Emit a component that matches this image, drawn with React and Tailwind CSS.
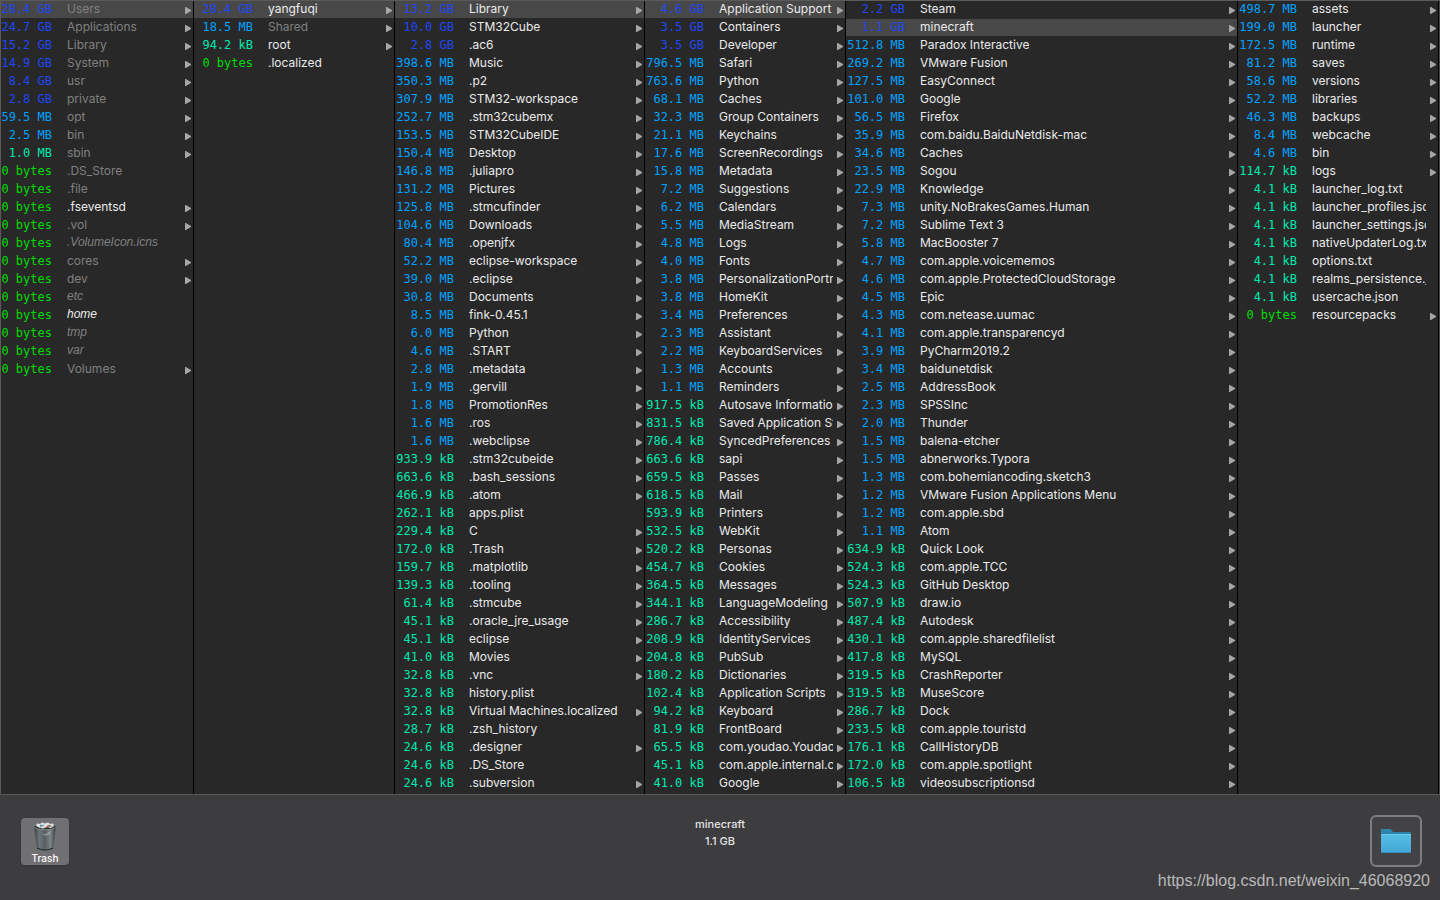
import React, { useState } from 'react';
import clsx from 'clsx';

// Each line: size | name | flags  (d = folder, g = dimmed, i = link)
const parse = (text) =>
    text.trim().split('\n').map((line) => {
        const [size, name, flags = ''] = line.trim().split('|');
        return { size, name, dir: flags.includes('d'), dim: flags.includes('g'), link: flags.includes('i') };
    });

const ROOT = parse(`
28.4 GB|Users|dg
24.7 GB|Applications|dg
15.2 GB|Library|dg
14.9 GB|System|dg
8.4 GB|usr|dg
2.8 GB|private|dg
459.5 MB|opt|dg
2.5 MB|bin|dg
1.0 MB|sbin|dg
0 bytes|.DS_Store|g
0 bytes|.file|g
0 bytes|.fseventsd|d
0 bytes|.vol|dg
0 bytes|.VolumeIcon.icns|gi
0 bytes|cores|dg
0 bytes|dev|dg
0 bytes|etc|gi
0 bytes|home|i
0 bytes|tmp|gi
0 bytes|var|gi
0 bytes|Volumes|dg
`);

const USERS = parse(`
28.4 GB|yangfuqi|d
18.5 MB|Shared|dg
94.2 kB|root|d
0 bytes|.localized
`);

const HOME = parse(`
13.2 GB|Library|d
10.0 GB|STM32Cube|d
2.8 GB|.ac6|d
398.6 MB|Music|d
350.3 MB|.p2|d
307.9 MB|STM32-workspace|d
252.7 MB|.stm32cubemx|d
153.5 MB|STM32CubeIDE|d
150.4 MB|Desktop|d
146.8 MB|.juliapro|d
131.2 MB|Pictures|d
125.8 MB|.stmcufinder|d
104.6 MB|Downloads|d
80.4 MB|.openjfx|d
52.2 MB|eclipse-workspace|d
39.0 MB|.eclipse|d
30.8 MB|Documents|d
8.5 MB|fink-0.45.1|d
6.0 MB|Python|d
4.6 MB|.START|d
2.8 MB|.metadata|d
1.9 MB|.gervill|d
1.8 MB|PromotionRes|d
1.6 MB|.ros|d
1.6 MB|.webclipse|d
933.9 kB|.stm32cubeide|d
663.6 kB|.bash_sessions|d
466.9 kB|.atom|d
262.1 kB|apps.plist
229.4 kB|C|d
172.0 kB|.Trash|d
159.7 kB|.matplotlib|d
139.3 kB|.tooling|d
61.4 kB|.stmcube|d
45.1 kB|.oracle_jre_usage|d
45.1 kB|eclipse|d
41.0 kB|Movies|d
32.8 kB|.vnc|d
32.8 kB|history.plist
32.8 kB|Virtual Machines.localized|d
28.7 kB|.zsh_history
24.6 kB|.designer|d
24.6 kB|.DS_Store
24.6 kB|.subversion|d
`);

const LIBRARY = parse(`
4.6 GB|Application Support|d
3.5 GB|Containers|d
3.5 GB|Developer|d
796.5 MB|Safari|d
763.6 MB|Python|d
68.1 MB|Caches|d
32.3 MB|Group Containers|d
21.1 MB|Keychains|d
17.6 MB|ScreenRecordings|d
15.8 MB|Metadata|d
7.2 MB|Suggestions|d
6.2 MB|Calendars|d
5.5 MB|MediaStream|d
4.8 MB|Logs|d
4.0 MB|Fonts|d
3.8 MB|PersonalizationPortrait|d
3.8 MB|HomeKit|d
3.4 MB|Preferences|d
2.3 MB|Assistant|d
2.2 MB|KeyboardServices|d
1.3 MB|Accounts|d
1.1 MB|Reminders|d
917.5 kB|Autosave Information|d
831.5 kB|Saved Application State|d
786.4 kB|SyncedPreferences|d
663.6 kB|sapi|d
659.5 kB|Passes|d
618.5 kB|Mail|d
593.9 kB|Printers|d
532.5 kB|WebKit|d
520.2 kB|Personas|d
454.7 kB|Cookies|d
364.5 kB|Messages|d
344.1 kB|LanguageModeling|d
286.7 kB|Accessibility|d
208.9 kB|IdentityServices|d
204.8 kB|PubSub|d
180.2 kB|Dictionaries|d
102.4 kB|Application Scripts|d
94.2 kB|Keyboard|d
81.9 kB|FrontBoard|d
65.5 kB|com.youdao.YoudaoD|d
45.1 kB|com.apple.internal.ck|d
41.0 kB|Google|d
`);

const SUPPORT = parse(`
2.2 GB|Steam|d
1.1 GB|minecraft|d
512.8 MB|Paradox Interactive|d
269.2 MB|VMware Fusion|d
127.5 MB|EasyConnect|d
101.0 MB|Google|d
56.5 MB|Firefox|d
35.9 MB|com.baidu.BaiduNetdisk-mac|d
34.6 MB|Caches|d
23.5 MB|Sogou|d
22.9 MB|Knowledge|d
7.3 MB|unity.NoBrakesGames.Human|d
7.2 MB|Sublime Text 3|d
5.8 MB|MacBooster 7|d
4.7 MB|com.apple.voicememos|d
4.6 MB|com.apple.ProtectedCloudStorage|d
4.5 MB|Epic|d
4.3 MB|com.netease.uumac|d
4.1 MB|com.apple.transparencyd|d
3.9 MB|PyCharm2019.2|d
3.4 MB|baidunetdisk|d
2.5 MB|AddressBook|d
2.3 MB|SPSSInc|d
2.0 MB|Thunder|d
1.5 MB|balena-etcher|d
1.5 MB|abnerworks.Typora|d
1.3 MB|com.bohemiancoding.sketch3|d
1.2 MB|VMware Fusion Applications Menu|d
1.2 MB|com.apple.sbd|d
1.1 MB|Atom|d
634.9 kB|Quick Look|d
524.3 kB|com.apple.TCC|d
524.3 kB|GitHub Desktop|d
507.9 kB|draw.io|d
487.4 kB|Autodesk|d
430.1 kB|com.apple.sharedfilelist|d
417.8 kB|MySQL|d
319.5 kB|CrashReporter|d
319.5 kB|MuseScore|d
286.7 kB|Dock|d
233.5 kB|com.apple.touristd|d
176.1 kB|CallHistoryDB|d
172.0 kB|com.apple.spotlight|d
106.5 kB|videosubscriptionsd|d
`);

const MINECRAFT = parse(`
498.7 MB|assets|d
199.0 MB|launcher|d
172.5 MB|runtime|d
81.2 MB|saves|d
58.6 MB|versions|d
52.2 MB|libraries|d
46.3 MB|backups|d
8.4 MB|webcache|d
4.6 MB|bin|d
114.7 kB|logs|d
4.1 kB|launcher_log.txt
4.1 kB|launcher_profiles.json
4.1 kB|launcher_settings.json
4.1 kB|nativeUpdaterLog.txt
4.1 kB|options.txt
4.1 kB|realms_persistence.json
4.1 kB|usercache.json
0 bytes|resourcepacks|d
`);

const COLUMNS = [
    { id: 'root', items: ROOT, selected: 0, className: 'w-[201px] shrink-0 -ml-2' },
    { id: 'users', items: USERS, selected: 0, className: 'w-[201px] shrink-0' },
    { id: 'home', items: HOME, selected: 0, className: 'w-[250px] shrink-0' },
    { id: 'library', items: LIBRARY, selected: 0, className: 'w-[201px] shrink-0' },
    { id: 'support', items: SUPPORT, selected: 1, className: 'min-w-[201px] flex-1' },
    { id: 'minecraft', items: MINECRAFT, selected: -1, className: 'w-[201px] shrink-0' },
];

const sizeColor = (size) => {
    if (size.endsWith('GB')) return 'text-[#1f47f5]';
    if (size.endsWith('kB') || size === '1.0 MB') return 'text-[#00e8ae]';
    if (size.endsWith('MB')) return 'text-[#00a2ff]';
    return 'text-[#00dc00]';
};

function Row({ item, active, onSelect }) {
    return (
        <li className="pb-px">
            <button
                type="button"
                onClick={onSelect}
                className={clsx('flex h-[17px] w-full items-start pr-0.5 pl-px text-left text-xs', active && 'bg-[#484848]')}
            >
                <span className={clsx("w-[58px] shrink-0 text-right font-['DejaVu_Sans_Mono',monospace] leading-[17px] whitespace-pre", sizeColor(item.size))}>
                    {item.size}
                </span>
                <span
                    className={clsx(
                        'mr-1 ml-[15px] min-w-0 flex-1 overflow-hidden leading-[15px] whitespace-nowrap',
                        item.link && 'italic',
                        item.link && "font-['Liberation_Sans',sans-serif]",
                        item.dim ? 'text-[#808080]' : 'text-[#ebebeb]'
                    )}
                >
                    {item.name}
                </span>
                <svg viewBox="0 0 6 7" className={clsx('mt-1.5 h-[7px] w-1.5 shrink-0', !item.dir && 'invisible')} aria-hidden="true">
                    <path d="M0 0 H0.8 L6 3 V4 L0.8 7 H0 Z" fill="#a6a6a6" />
                </svg>
            </button>
        </li>
    );
}

function Column({ column }) {
    const [selected, setSelected] = useState(column.selected);

    return (
        <ul className={clsx('border-r border-black pb-px', column.className)}>
            {column.items.map((item, i) => (
                <Row key={item.name} item={item} active={i === selected} onSelect={() => setSelected(i)} />
            ))}
        </ul>
    );
}

function TrashIcon() {
    return (
        <svg viewBox="0 0 26 32" className="h-8 w-[26px]" aria-hidden="true">
            <defs>
                <linearGradient id="bin" x1="0" x2="1">
                    <stop offset="0" stopColor="#384044" />
                    <stop offset="0.25" stopColor="#6d7678" />
                    <stop offset="0.5" stopColor="#565e60" />
                    <stop offset="0.75" stopColor="#7b8486" />
                    <stop offset="1" stopColor="#343b3e" />
                </linearGradient>
            </defs>
            <path d="M2 6 L5 29 Q13 33 21 29 L24 6 Z" fill="url(#bin)" />
            <path d="M5 28 Q13 32 21 28" fill="none" stroke="#222a2d" strokeWidth="1.2" />
            <path d="M10 14 Q15 15 19 10 L18 14 Q14 17 10 14" fill="#a5adaf" opacity="0.7" />
            <ellipse cx="13" cy="6.5" rx="11" ry="3.2" fill="#2c3335" stroke="#8f9799" strokeWidth="0.8" />
            <path d="M4 6 L5 3.6 L8 4 L10 2.4 L13 3.4 L16 2.4 L18 4 L21 3.6 L22 6 L19 8 L15 7 L11 8.4 L7 7.6 Z" fill="#e0e2e2" />
            <path d="M8 4.4 l2 1 -1 2 z M17 4.4 l2 2 -3 0 z" fill="#424a4d" />
            <circle cx="11" cy="5.4" r="1" fill="#3fb6c2" />
            <circle cx="15.5" cy="6.4" r="1" fill="#d0563b" />
            <circle cx="19" cy="6" r="0.8" fill="#b9834a" />
        </svg>
    );
}

function FolderIcon() {
    return (
        <svg viewBox="0 0 32 26" className="h-[26px] w-8" aria-hidden="true">
            <defs>
                <linearGradient id="folder" x1="0" x2="0" y1="0" y2="1">
                    <stop offset="0" stopColor="#57bde6" />
                    <stop offset="1" stopColor="#41a8d6" />
                </linearGradient>
            </defs>
            <path d="M1 1.8 Q1 1 2 1 H10 Q11 1 11.6 2 L13 4 H30 Q31 4 31 5 V10 H1 Z" fill="#2c85ab" />
            <path d="M1 6 H31 V24 Q31 25 30 25 H2 Q1 25 1 24 Z" fill="url(#folder)" />
            <path d="M1 6.5 H31" stroke="#6cc8ec" />
            <path d="M1.5 24.5 H30.5" stroke="#3390bb" />
        </svg>
    );
}

export default function App() {
    return (
        <div className="flex min-h-screen flex-col bg-[#3d3d3f] font-[Inter,sans-serif] text-[#e4e4e4]">
            <main className="flex overflow-hidden border border-[#5a5a5a] border-r-[#4a4a4a] bg-[#282828]">
                {COLUMNS.map((column) => (
                    <Column key={column.id} column={column} />
                ))}
            </main>

            <footer className="grid flex-1 grid-cols-3 px-5 pt-5">
                <div className="pt-[3px]">
                    <button type="button" className="ml-px flex h-[47px] w-12 flex-col items-center rounded-sm bg-[#707073] pt-0.5 text-[10px] leading-3 font-medium text-white shadow">
                        <TrashIcon />
                        Trash
                    </button>
                </div>

                <div className="pt-px text-center text-[11px] leading-[17px] font-medium">
                    <p>minecraft</p>
                    <p>1.1 GB</p>
                </div>

                <div className="-mr-2.5 flex flex-col items-end">
                    <button type="button" aria-label="Open folder" className="mr-2 flex size-[52px] items-center justify-center rounded-md border-2 border-[#7d7d7f] bg-[#434345]">
                        <FolderIcon />
                    </button>
                    <a href="https://blog.csdn.net/weixin_46068920" className="mt-1 font-['Liberation_Sans',sans-serif] text-base leading-5 whitespace-nowrap text-[#b9b9ba]">
                        https://blog.csdn.net/weixin_46068920
                    </a>
                </div>
            </footer>
        </div>
    );
}
